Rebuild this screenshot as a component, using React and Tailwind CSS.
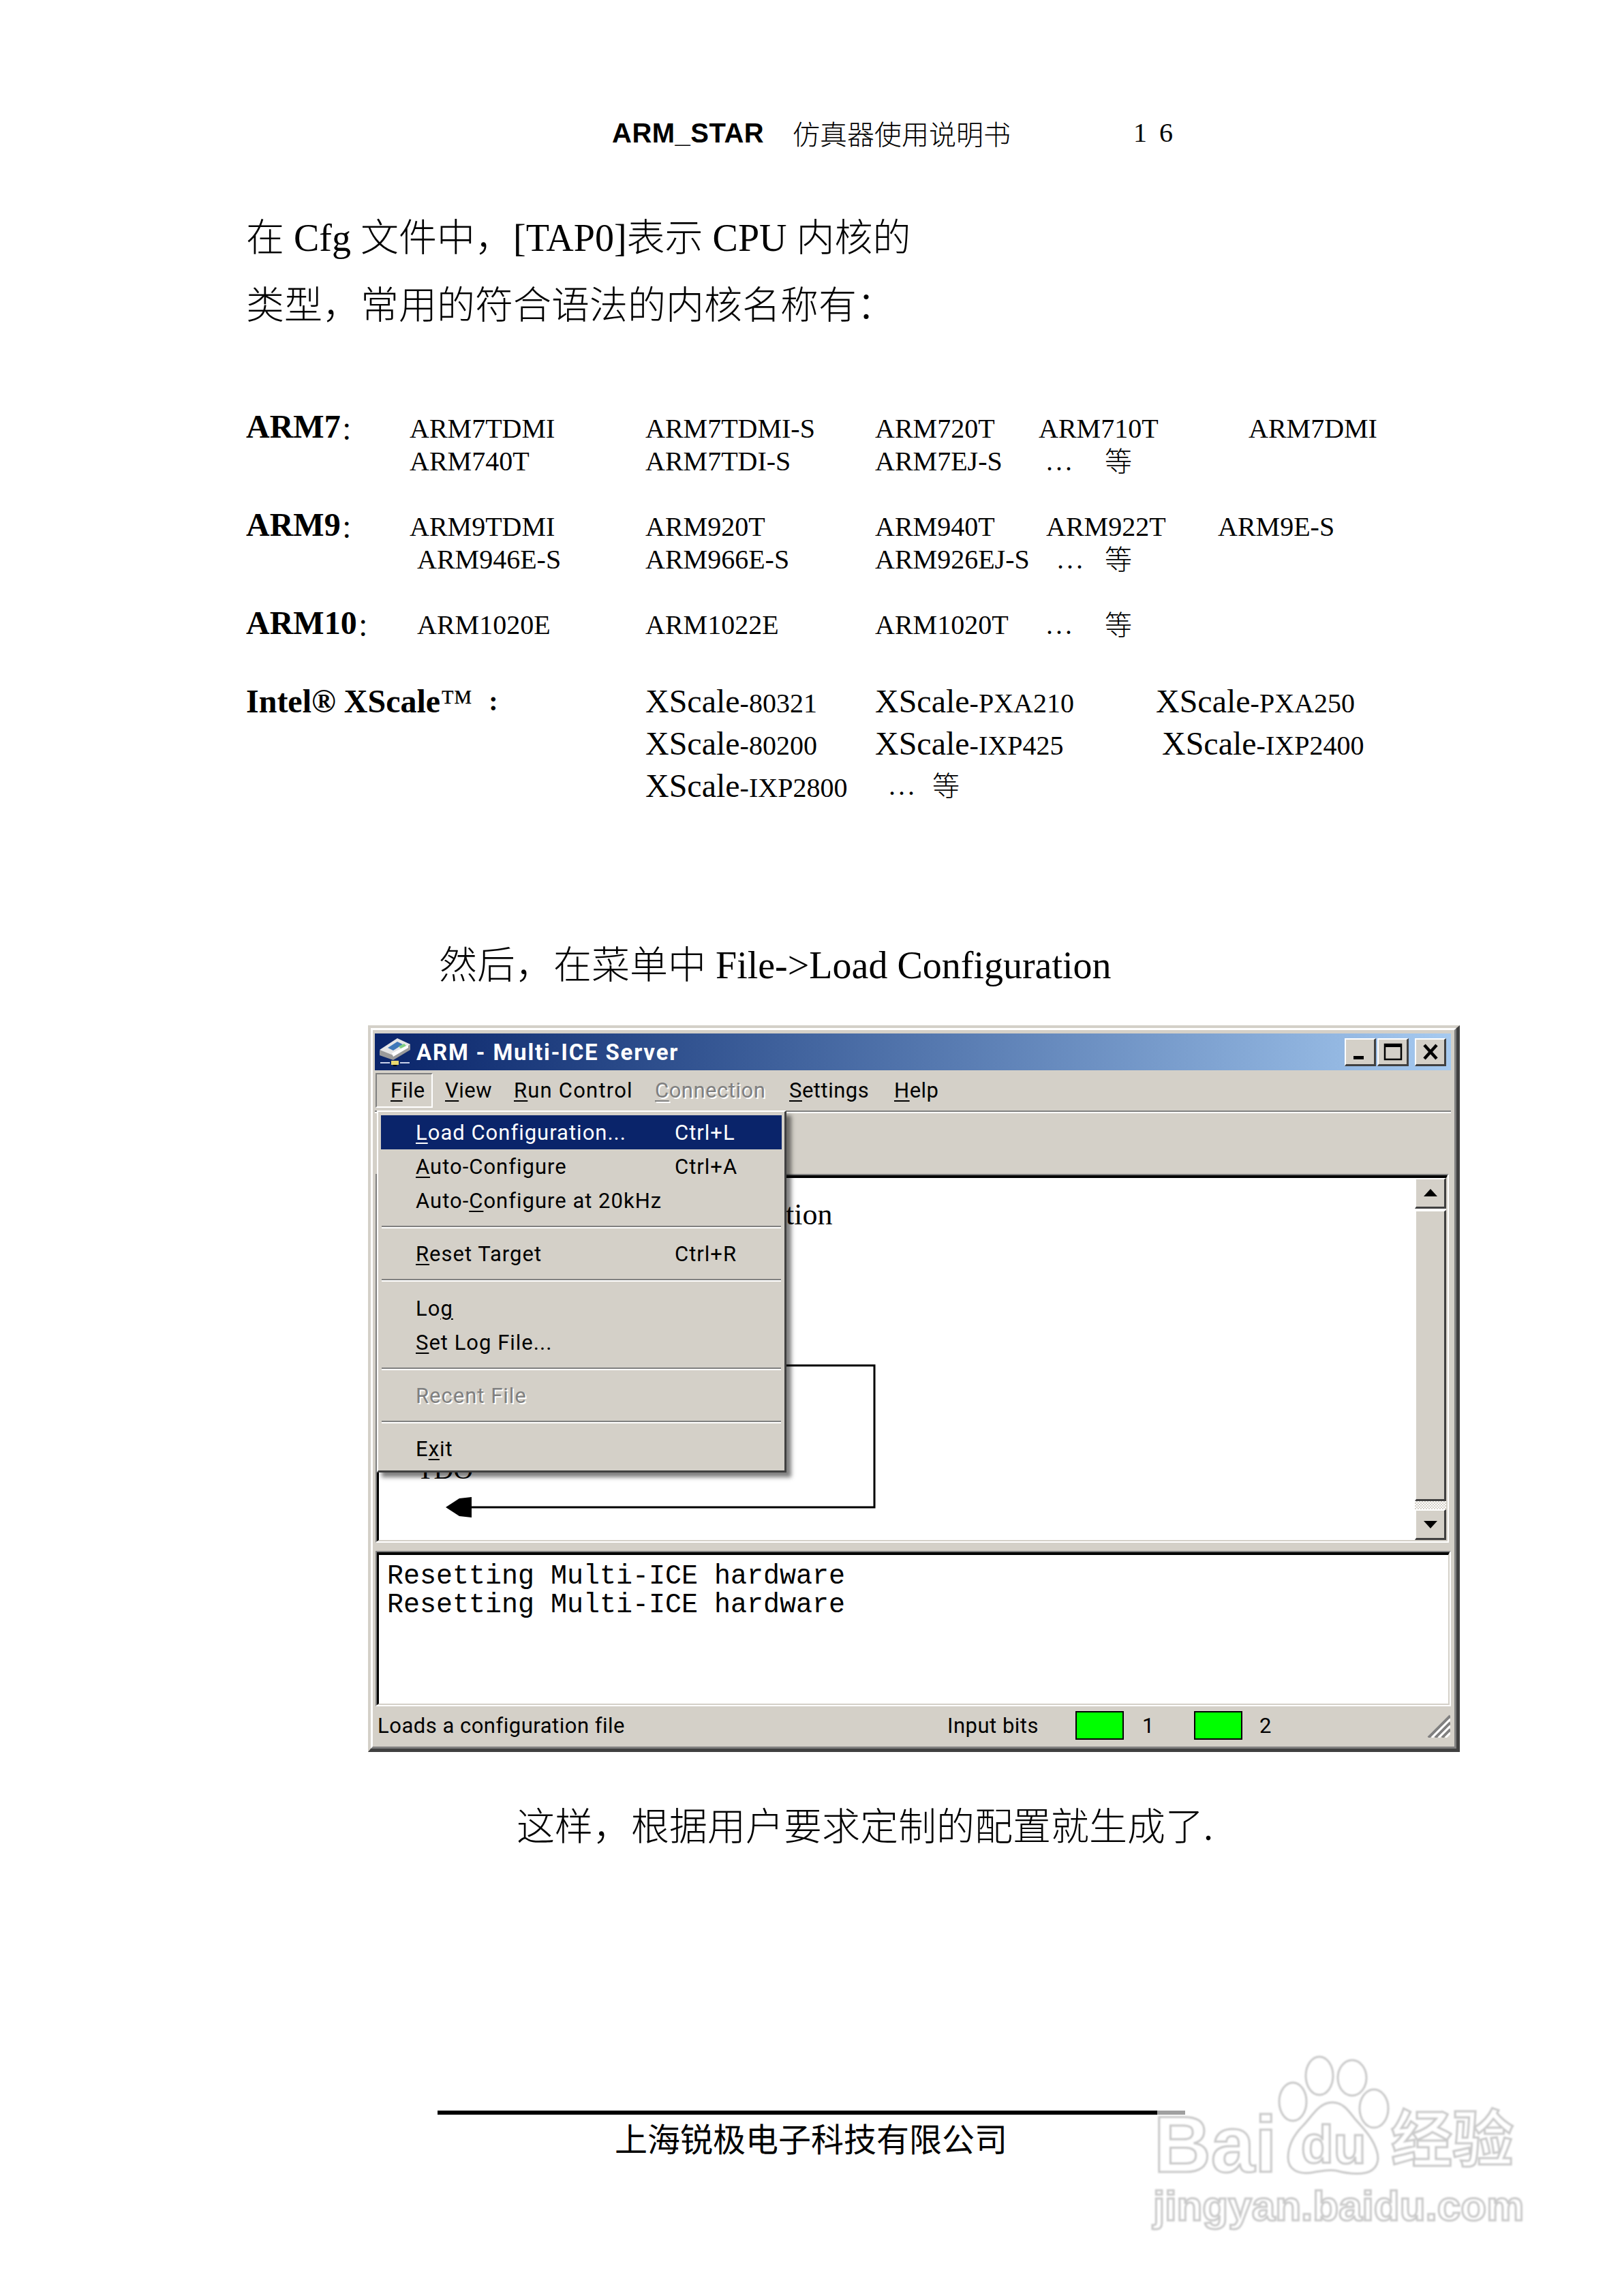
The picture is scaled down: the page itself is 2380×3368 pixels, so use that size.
const serif = "font-['Liberation_Serif','Noto_Sans_CJK_SC',serif]";
const ui = "font-['Roboto','Noto_Sans',sans-serif]";

function Row({ children, tall }) {
  return <div className={`flex items-center ml-[361px] text-[40px] leading-none text-black whitespace-pre ${tall ? 'h-[62px]' : 'h-[48px]'}`}>{children}</div>;
}

function Etc() {
  return <span className="tracking-[4px]">...</span>;
}

function Deng() {
  return <span className="font-['Noto_Sans_CJK_SC',sans-serif] font-light -translate-y-[3px]">等</span>;
}

function Label({ children }) {
  return <b className="text-[48px]">{children}</b>;
}

function ArmLabel({ children }) {
  return <b className="inline-block text-[48px] -translate-y-[3px]">{children}</b>;
}

function Colon() {
  return <span className="font-['Noto_Sans_CJK_SC',sans-serif] text-[36px]">：</span>;
}

function XSP({ small, num }) {
  return <span><span className="text-[48px]">XScale</span><span className="text-[40px]">-{small}{num}</span></span>;
}

function U({ children }) {
  return <span className="underline decoration-2 underline-offset-4">{children}</span>;
}

function MenuItem({ children, shortcut, active, disabled }) {
  return (
    <div className={`flex items-center h-[50px] pl-[51px] mx-[1px] text-[31px] leading-none tracking-[1px] ${active ? 'bg-[#0a246a] text-white' : disabled ? 'text-[#808080] [text-shadow:2px_2px_0_#ffffff]' : 'text-black'}`}>
      <span className="w-[380px] whitespace-pre">{children}</span>
      <span>{shortcut}</span>
    </div>
  );
}

function MenuSep() {
  return (
    <div className="h-[28px] flex items-center">
      <div className="w-full mx-[2px] border-t-2 border-b-2 border-t-[#808080] border-b-white" />
    </div>
  );
}

function WinButton({ children }) {
  return (
    <div className="w-[46px] h-[41px] bg-[#d4d0c8] border-t-2 border-l-2 border-r-[3px] border-b-[3px] border-t-white border-l-white border-r-[#404040] border-b-[#404040] flex items-center justify-center">
      <svg width="34" height="30" viewBox="0 0 34 30">{children}</svg>
    </div>
  );
}

function ScrollButton({ down }) {
  return (
    <div className="w-[46px] h-[45px] shrink-0 bg-[#d4d0c8] border-t-2 border-l-2 border-r-[3px] border-b-[3px] border-t-white border-l-white border-r-[#404040] border-b-[#404040] flex items-center justify-center">
      <svg width="22" height="14" viewBox="0 0 22 14">
        <polygon points={down ? '1,2 21,2 11,13' : '11,1 21,12 1,12'} fill="#000" />
      </svg>
    </div>
  );
}

function TitleIcon() {
  return (
    <svg width="50" height="44" viewBox="0 0 50 44" className="shrink-0 ml-[5px]">
      <polygon points="2,20 28,3 47,11 47,19 22,34 2,27" fill="#9a9a9a" />
      <polygon points="2,19 28,2 47,11 22,27" fill="#e6e6e6" />
      <polygon points="14,16 28,7 36,11 22,20" fill="#3f78b8" />
      <polygon points="30,14 38,10 41,13 33,17" fill="#7fd07f" />
      <polygon points="20,24 44,12 44,16 22,29" fill="#ffffff" />
      <rect x="3" y="37" width="14" height="2" fill="#c8d0e8" />
      <rect x="32" y="37" width="14" height="2" fill="#c8d0e8" />
      <rect x="19" y="35" width="11" height="6" fill="#e8d870" />
      <rect x="22" y="41" width="5" height="2" fill="#000" />
    </svg>
  );
}

function Baidu() {
  const stroke = "text-white [-webkit-text-stroke:3px_#c9c9c9] font-['Liberation_Sans','Noto_Sans_CJK_SC',sans-serif] font-bold leading-none absolute whitespace-pre";
  return (
    <div className="absolute left-[1680px] top-[3000px] w-[560px] h-[290px] blur-[1px]">
      <svg viewBox="0 0 560 290" width="560" height="290" className="absolute inset-0">
        <g fill="#ffffff" stroke="#c9c9c9" strokeWidth="3">
          <ellipse cx="217" cy="83" rx="20" ry="28" />
          <ellipse cx="256" cy="45" rx="20" ry="28" />
          <ellipse cx="304" cy="48" rx="21" ry="26" />
          <ellipse cx="336" cy="93" rx="21" ry="28" />
          <path d="M275 84 C255 84 245 105 232 118 C220 130 210 145 210 165 C210 182 224 190 245 187 C258 185 268 182 280 184 C295 188 312 190 325 187 C340 183 345 170 340 155 C334 135 320 122 308 108 C298 95 290 84 275 84 Z" />
        </g>
      </svg>
      <div className={`${stroke} left-[13px] top-[88px] text-[116px]`}>Bai</div>
      <div className={`${stroke} left-[229px] top-[107px] text-[78px]`}>du</div>
      <div className={`${stroke} left-[361px] top-[94px] text-[90px]`}>经验</div>
      <div className={`${stroke} left-[12px] top-[205px] text-[62px]`}>jingyan.baidu.com</div>
    </div>
  );
}

function Window() {
  return (
    <div className="ml-[540px] mt-[53px] w-[1602px] h-[1066px] border-t-4 border-l-4 border-r-[5px] border-b-[5px] border-t-[#d4d0c8] border-l-[#d4d0c8] border-r-[#404040] border-b-[#404040]">
      <div className="h-full border-t-[3px] border-l-[3px] border-r-[3px] border-b-[3px] border-t-white border-l-white border-r-[#808080] border-b-[#808080] bg-[#d4d0c8] pt-[5px] pl-[3px] pr-[5px] pb-[3px]">
        <div className={`relative h-full flex flex-col ${ui}`}>
          {/* title bar */}
          <div className="h-[54px] shrink-0 flex items-center bg-gradient-to-r from-[#0a246a] to-[#a6caf0]">
            <TitleIcon />
            <span className="ml-[6px] text-white font-bold text-[33px] leading-none tracking-[1.8px]">ARM - Multi-ICE Server</span>
            <div className="ml-auto flex items-center pr-[7px]">
              <WinButton><rect x="7" y="21" width="15" height="5" fill="#000" /></WinButton>
              <div className="w-[2px]" />
              <WinButton><rect x="5" y="4" width="24" height="22" fill="none" stroke="#000" strokeWidth="2.5" /><rect x="5" y="3" width="24" height="5" fill="#000" /></WinButton>
              <div className="w-[9px]" />
              <WinButton><path d="M8 5 L26 25 M26 5 L8 25" stroke="#000" strokeWidth="4.5" /></WinButton>
            </div>
          </div>
          {/* menu bar */}
          <div className="h-[61px] shrink-0 flex items-center text-[31px] leading-none tracking-[0.5px] text-black border-b-2 border-b-[#808080] whitespace-pre">
            <div className="ml-[1px] w-[84px] h-[51px] pl-[20px] flex items-center border-t-2 border-l-2 border-r-2 border-b-2 border-t-[#808080] border-l-[#808080] border-r-white border-b-white"><U>F</U>ile</div>
            <span className="ml-[18px] w-[101px]"><U>V</U>iew</span>
            <span className="w-[207px] tracking-[1.2px]"><U>R</U>un Control</span>
            <span className="w-[197px] text-[#808080] [text-shadow:2px_2px_0_#ffffff]"><U>C</U>onnection</span>
            <span className="w-[154px]"><U>S</U>ettings</span>
            <span><U>H</U>elp</span>
          </div>
          <div className="h-[2px] shrink-0 bg-white" />
          {/* toolbar */}
          <div className="h-[89px] shrink-0" />
          {/* upper pane */}
          <div className="h-[541px] shrink-0 w-[1575px] ml-[1px] border-t-2 border-l-2 border-r-2 border-b-2 border-t-[#808080] border-l-[#808080] border-r-white border-b-white">
            <div className="h-full flex border-t-4 border-l-[3px] border-r-2 border-b-2 border-t-black border-l-black border-r-[#d4d0c8] border-b-[#d4d0c8] bg-white">
              <div className="relative flex-1">
                <svg width="1520" height="530" viewBox="0 0 1520 530" className="absolute inset-0">
                  <path d="M500 275 H727 V483 H130" fill="none" stroke="#000" strokeWidth="3" />
                  <polygon points="98,483 118,470 136,468 136,498 118,496" fill="#000" />
                </svg>
                <span className="absolute left-[597px] top-[32px] text-[44px] leading-none font-['Liberation_Serif',serif] text-black">tion</span>
                <span className="absolute left-[56px] top-[408px] text-[40px] leading-none font-['Liberation_Serif',serif] text-black">TDO</span>
              </div>
              <div className="w-[46px] flex flex-col">
                <ScrollButton />
                <div className="flex-1 mt-[2px] bg-[#d4d0c8] border-t-2 border-l-2 border-r-[3px] border-b-[3px] border-t-white border-l-white border-r-[#404040] border-b-[#404040]" />
                <div className="h-[12px] shrink-0 bg-[repeating-conic-gradient(#d4d0c8_0_25%,#ffffff_0_50%)] bg-[length:4px_4px]" />
                <ScrollButton down />
              </div>
            </div>
          </div>
          {/* lower pane */}
          <div className="mt-[12px] h-[228px] shrink-0 ml-[1px] border-t-2 border-l-2 border-r-2 border-b-2 border-t-[#808080] border-l-[#808080] border-r-white border-b-white">
            <div className="h-full border-t-4 border-l-[3px] border-r-2 border-b-2 border-t-black border-l-black border-r-[#d4d0c8] border-b-[#d4d0c8] bg-white pl-[12px] pt-[11px] text-[40px] leading-[42px] font-['Liberation_Mono',monospace] text-black whitespace-pre">
              <div>Resetting Multi-ICE hardware</div>
              <div>Resetting Multi-ICE hardware</div>
            </div>
          </div>
          {/* status bar */}
          <div className="flex-1 flex items-center text-[31px] leading-none tracking-[0.5px] text-black whitespace-pre">
            <span className="ml-[4px] w-[836px]">Loads a configuration file</span>
            <span className="w-[188px]">Input bits</span>
            <div className="w-[71px] h-[42px] bg-[#00ff00] border-2 border-black" />
            <span className="ml-[27px] w-[76px]">1</span>
            <div className="w-[71px] h-[42px] bg-[#00ff00] border-2 border-black" />
            <span className="ml-[25px]">2</span>
            <svg width="36" height="36" viewBox="0 0 36 36" className="ml-auto mr-[1px]">
              <path d="M4 36 L36 4 M14 36 L36 14 M24 36 L36 24" stroke="#808080" strokeWidth="4" />
              <path d="M9 36 L36 9 M19 36 L36 19 M29 36 L36 29" stroke="#ffffff" strokeWidth="3" />
            </svg>
          </div>
          {/* open file menu */}
          <div className="absolute left-[3px] top-[113px] w-[601px] h-[531px] bg-[#d4d0c8] border-t-2 border-l-2 border-r-[3px] border-b-[3px] border-t-white border-l-white border-r-[#404040] border-b-[#404040] pt-[5px] px-[3px] shadow-[7px_7px_6px_rgba(0,0,0,0.5)]">
            <MenuItem active shortcut="Ctrl+L"><U>L</U>oad Configuration...</MenuItem>
            <MenuItem shortcut="Ctrl+A"><U>A</U>uto-Configure</MenuItem>
            <MenuItem>Auto-<U>C</U>onfigure at 20kHz</MenuItem>
            <MenuSep />
            <MenuItem shortcut="Ctrl+R"><U>R</U>eset Target</MenuItem>
            <MenuSep />
            <div className="h-[2px]" />
            <MenuItem>Lo<U>g</U></MenuItem>
            <MenuItem><U>S</U>et Log File...</MenuItem>
            <MenuSep />
            <MenuItem disabled>Recent File</MenuItem>
            <MenuSep />
            <MenuItem>E<U>x</U>it</MenuItem>
          </div>
        </div>
      </div>
    </div>
  );
}

export default function App() {
  return (
    <div className={`relative w-[2380px] h-[3368px] overflow-hidden bg-white text-black ${serif}`}>
      {/* header */}
      <div className="pt-[170px]">
        <div className="flex items-center h-[50px] ml-[898px] text-[40px] leading-none whitespace-pre">
          <b className="w-[265px] font-['Liberation_Sans',sans-serif] tracking-[0.5px]">ARM_STAR</b>
          <span className="w-[500px] font-['Noto_Sans_CJK_SC',sans-serif] font-light">仿真器使用说明书</span>
          <span className="tracking-[18px]">16</span>
        </div>
      </div>

      {/* intro */}
      <div className="mt-[80px] ml-[361px] text-[56px] leading-[99px] whitespace-pre font-light">
        <div>在 Cfg 文件中，[TAP0]表示 CPU 内核的</div>
        <div>类型，常用的符合语法的内核名称有：</div>
      </div>

      {/* core list */}
      <div className="mt-[107px]">
        <Row>
          <span className="w-[240px]"><ArmLabel>ARM7</ArmLabel><Colon /></span>
          <span className="w-[346px]">ARM7TDMI</span>
          <span className="w-[337px]">ARM7TDMI-S</span>
          <span className="w-[240px]">ARM720T</span>
          <span className="w-[308px]">ARM710T</span>
          <span>ARM7DMI</span>
        </Row>
        <Row>
          <span className="w-[240px]" />
          <span className="w-[346px]">ARM740T</span>
          <span className="w-[337px]">ARM7TDI-S</span>
          <span className="w-[251px]">ARM7EJ-S</span>
          <span className="w-[86px]"><Etc /></span>
          <Deng />
        </Row>
      </div>
      <div className="mt-[48px]">
        <Row>
          <span className="w-[240px]"><ArmLabel>ARM9</ArmLabel><Colon /></span>
          <span className="w-[346px]">ARM9TDMI</span>
          <span className="w-[337px]">ARM920T</span>
          <span className="w-[251px]">ARM940T</span>
          <span className="w-[252px]">ARM922T</span>
          <span>ARM9E-S</span>
        </Row>
        <Row>
          <span className="w-[251px]" />
          <span className="w-[335px]">ARM946E-S</span>
          <span className="w-[337px]">ARM966E-S</span>
          <span className="w-[267px]">ARM926EJ-S</span>
          <span className="w-[70px]"><Etc /></span>
          <Deng />
        </Row>
      </div>
      <div className="mt-[48px]">
        <Row>
          <span className="w-[251px]"><ArmLabel>ARM10</ArmLabel><Colon /></span>
          <span className="w-[335px]">ARM1020E</span>
          <span className="w-[337px]">ARM1022E</span>
          <span className="w-[251px]">ARM1020T</span>
          <span className="w-[86px]"><Etc /></span>
          <Deng />
        </Row>
      </div>
      <div className="mt-[57px]">
        <Row tall>
          <span className="w-[586px] flex items-center">
            <Label>Intel® XScale</Label><span className="text-[48px]">™</span>
            <b className="ml-[24px] text-[40px]">:</b>
          </span>
          <span className="w-[337px]"><XSP small="" num="80321" /></span>
          <span className="w-[412px]"><XSP small="PXA" num="210" /></span>
          <span><XSP small="PXA" num="250" /></span>
        </Row>
        <Row tall>
          <span className="w-[586px]" />
          <span className="w-[337px]"><XSP small="" num="80200" /></span>
          <span className="w-[421px]"><XSP small="IXP" num="425" /></span>
          <span><XSP small="IXP" num="2400" /></span>
        </Row>
        <Row tall>
          <span className="w-[586px]" />
          <span className="w-[357px]"><XSP small="IXP" num="2800" /></span>
          <span className="w-[64px]"><Etc /></span>
          <Deng />
        </Row>
      </div>

      <div className="mt-[197px] ml-[644px] h-[70px] flex items-center text-[56px] leading-none whitespace-pre font-light">
        然后，在菜单中 File-&gt;Load Configuration
      </div>

      <Window />

      <div className="mt-[75px] ml-[758px] h-[70px] flex items-center text-[56px] leading-none whitespace-pre font-light">
        这样，根据用户要求定制的配置就生成了.
      </div>

      {/* footer */}
      <div className="mt-[381px] ml-[642px] flex h-[6px]">
        <div className="w-[1056px] bg-black" />
        <div className="w-[41px] bg-[#a0a0a0]" />
      </div>
      <div className="mt-[3px] ml-[902px] h-[60px] flex items-center text-[48px] leading-none font-['Noto_Sans_CJK_SC',sans-serif]">
        上海锐极电子科技有限公司
      </div>

      <Baidu />
    </div>
  );
}
